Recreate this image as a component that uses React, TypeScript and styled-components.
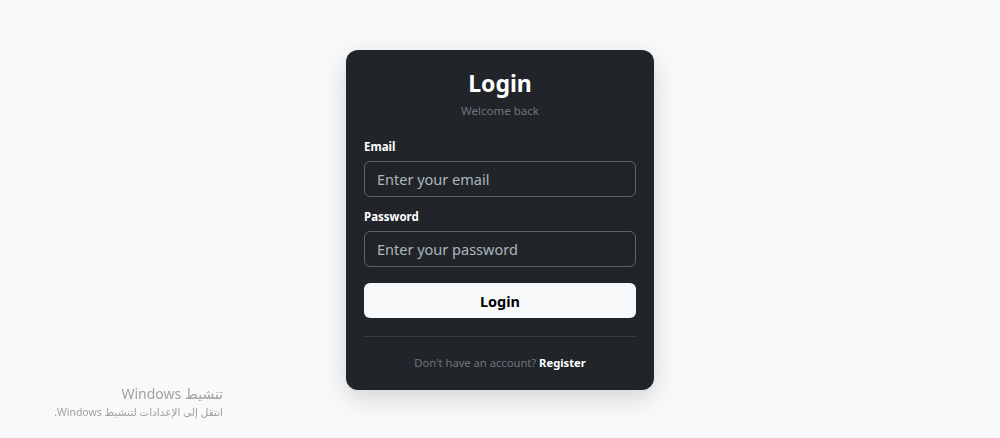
import React from 'react';
import styled, { createGlobalStyle } from 'styled-components';

const GlobalStyle = createGlobalStyle`
    html, body {
        margin: 0;
        padding: 0;
        background: #f8f9fa;
        font-family: "Noto Sans", "Open Sans", sans-serif;
    }
    * {
        box-sizing: border-box;
    }
`;

export default function App() {
    return (
        <Page>
            <GlobalStyle />
            <Card>
                <Title>Login</Title>
                <Subtitle>Welcome back</Subtitle>
                <Field>
                    <Label>Email</Label>
                    <Input type="email" placeholder="Enter your email" />
                </Field>
                <Field>
                    <Label>Password</Label>
                    <Input type="password" placeholder="Enter your password" />
                </Field>
                <SubmitButton>Login</SubmitButton>
                <Divider />
                <Footer>
                    Don't have an account? <RegisterLink href="#">Register</RegisterLink>
                </Footer>
            </Card>
            <Activation dir="rtl">
                <ActivationTitle>تنشيط Windows</ActivationTitle>
                <ActivationText>انتقل إلى الإعدادات لتنشيط Windows.</ActivationText>
            </Activation>
        </Page>
    );
}

const Page = styled.div`
    min-height: 438px;
    display: flex;
    justify-content: center;
    align-items: flex-start;
    padding-top: 50px;
`;

const Card = styled.div`
    width: 308px;
    background: #212529;
    border-radius: 12px;
    padding: 18px 18px 18px;
    display: flex;
    flex-direction: column;
    box-shadow: 0 8px 24px rgba(0, 0, 0, 0.15);
`;

const Title = styled.h1`
    margin: 0;
    text-align: center;
    color: #ffffff;
    font-size: 23px;
    font-weight: 700;
    line-height: 30px;
`;

const Subtitle = styled.p`
    margin: 4px 0 0;
    text-align: center;
    color: #6c757d;
    font-size: 11.5px;
    line-height: 18px;
`;

const Field = styled.div`
    display: flex;
    flex-direction: column;
    margin-top: 18px;

    & + & {
        margin-top: 11px;
    }
`;

const Label = styled.label`
    color: #ffffff;
    font-size: 11.5px;
    font-weight: 700;
    line-height: 18px;
    margin-bottom: 5px;
`;

const Input = styled.input`
    height: 36px;
    width: 100%;
    background: #212529;
    border: 1px solid #5c636a;
    border-radius: 6px;
    padding: 0 12px;
    color: #ffffff;
    font-family: inherit;
    font-size: 14.5px;
    outline: none;

    &::placeholder {
        color: #adb5bd;
    }
`;

const SubmitButton = styled.button`
    margin-top: 16px;
    height: 35px;
    width: 100%;
    background: #f8f9fa;
    border: none;
    border-radius: 6px;
    color: #000000;
    font-family: inherit;
    font-size: 14.5px;
    font-weight: 700;
    cursor: pointer;
`;

const Divider = styled.hr`
    margin: 18px 0 0;
    border: none;
    border-top: 1px solid #343a40;
`;

const Footer = styled.p`
    margin: 17px 0 0;
    text-align: center;
    color: #6c757d;
    font-size: 11.2px;
    line-height: 18px;
`;

const RegisterLink = styled.a`
    color: #ffffff;
    font-weight: 700;
    text-decoration: none;
`;

const Activation = styled.div`
    position: fixed;
    left: 50px;
    top: 384px;
    width: 173px;
    color: #a0a0a0;
    font-family: "Noto Sans", "DejaVu Sans", sans-serif;
    text-align: right;
    pointer-events: none;
`;

const ActivationTitle = styled.div`
    font-size: 14px;
    line-height: 20px;
`;

const ActivationText = styled.div`
    font-size: 10.5px;
    line-height: 16px;
`;
